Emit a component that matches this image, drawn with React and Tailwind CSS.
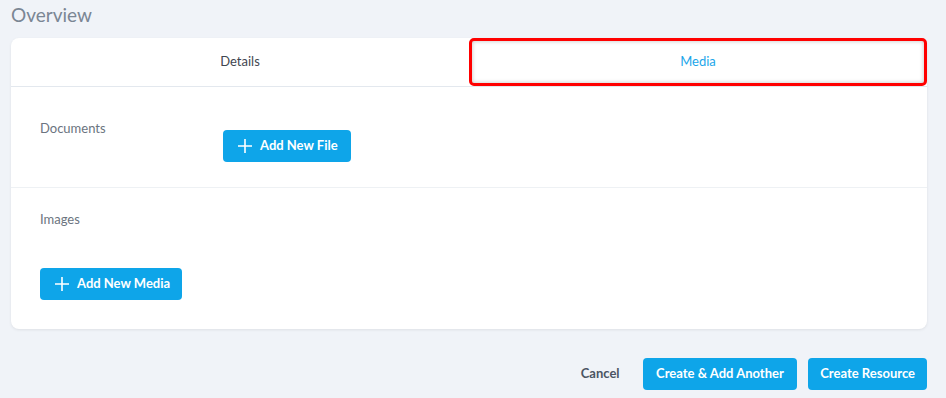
import React, { useState } from "react";

function PlusIcon() {
  return (
    <svg width="16" height="16" viewBox="0 0 16 16" fill="none" stroke="currentColor" strokeWidth="1.6">
      <path d="M8 1v14M1 8h14" />
    </svg>
  );
}

export default function App() {
  const [tab, setTab] = useState("media");

  return (
    <div
      className="min-h-[398px] bg-[#f0f3f8] pl-[11px] pr-[19px] pt-[3px]"
      style={{ fontFamily: 'Lato, "Noto Sans", sans-serif' }}
    >
      <h1 className="text-[19px] leading-[24px] text-[#7b8694] font-normal">Overview</h1>

      <div className="mt-[11px] bg-white rounded-lg shadow-[0_1px_3px_rgba(0,0,0,0.08)]">
        <div className="grid grid-cols-2 h-[49px] border-b border-[#e3e8ee]">
          <button
            onClick={() => setTab("details")}
            className={
              "flex items-center justify-center text-[13px] " +
              (tab === "details" ? "text-[#0ea5e9]" : "text-[#3f4650]")
            }
          >
            Details
          </button>
          <button
            onClick={() => setTab("media")}
            className={
              "flex items-center justify-center text-[13px] rounded-[5px] border-[3px] border-[#ff0000] shadow-[inset_0_0_4px_rgba(0,0,0,0.25)] " +
              (tab === "media" ? "text-[#1ba6ea]" : "text-[#3f4650]")
            }
          >
            Media
          </button>
        </div>

        <div className="flex h-[101px] border-b border-[#eef1f4] pl-[29px]">
          <div className="w-[183px] pt-[32px] text-[13px] text-[#6b7480]">Documents</div>
          <div className="pt-[43px]">
            <button className="flex items-center gap-[7px] h-[32px] pl-[14px] pr-[13px] rounded-[4px] bg-[#0ea5e9] text-white text-[13px] font-bold">
              <PlusIcon />
              Add New File
            </button>
          </div>
        </div>

        <div className="h-[141px] pl-[29px] pt-[22px]">
          <div className="text-[13px] text-[#6b7480]">Images</div>
          <button className="mt-[38px] flex items-center gap-[7px] h-[32px] pl-[14px] pr-[12px] rounded-[4px] bg-[#0ea5e9] text-white text-[13px] font-bold">
            <PlusIcon />
            Add New Media
          </button>
        </div>
      </div>

      <div className="mt-[29px] flex items-center justify-end">
        <button className="text-[13px] font-bold text-[#4b5563] mr-[23px]">Cancel</button>
        <button className="h-[32px] px-[13.5px] rounded-[4px] bg-[#0ea5e9] text-white text-[13px] font-bold mr-[11px]">
          Create &amp; Add Another
        </button>
        <button className="h-[32px] px-[12px] rounded-[4px] bg-[#0ea5e9] text-white text-[13px] font-bold">
          Create Resource
        </button>
      </div>
    </div>
  );
}
